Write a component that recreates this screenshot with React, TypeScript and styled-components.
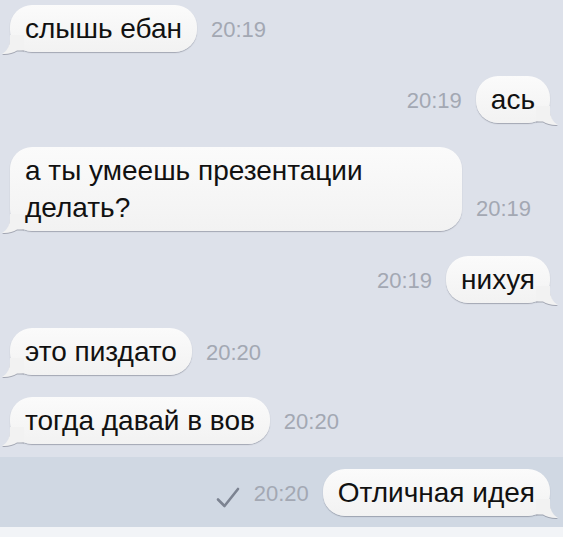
import React from "react";
import styled, { createGlobalStyle } from "styled-components";

const Global = createGlobalStyle`
  html, body { margin: 0; padding: 0; }
  body {
    background: #dde1ea;
    font-family: "Liberation Sans", Arial, Helvetica, sans-serif;
    -webkit-font-smoothing: antialiased;
  }
`;

const Screen = styled.div`
  width: 563px;
  height: 537px;
  overflow: hidden;
  display: flex;
  flex-direction: column;
  padding-top: 5px;
  box-sizing: border-box;
  background: #dde1ea;
`;

const Row = styled.div<{ $out?: boolean; $gap: number }>`
  display: flex;
  align-items: flex-end;
  justify-content: ${(p) => (p.$out ? "flex-end" : "flex-start")};
  gap: 14px;
  margin-top: ${(p) => p.$gap}px;
  padding: ${(p) => (p.$out ? "0 13px 0 0" : "0 0 0 10px")};
`;

const Band = styled.div`
  margin-top: 13px;
  padding: 12px 0 11px;
  background: #d0d8e3;
  display: flex;
  flex-direction: column;
`;

const Footer = styled.div`
  flex: 1;
  background: #f2f4f7;
`;

const Bubble = styled.div<{ $max?: number }>`
  position: relative;
  box-sizing: border-box;
  max-width: ${(p) => (p.$max ? `${p.$max}px` : "none")};
  padding: 5px 15px 5px;
  border-radius: 22px;
  background: linear-gradient(#fbfbfb, #f2f2f2);
  box-shadow: 0 1px 1px rgba(90, 95, 110, 0.45);
  color: #111;
  font-size: 28px;
  line-height: 37px;
  white-space: pre-wrap;
`;

const Text = styled.span`
  position: relative;
  z-index: 1;
`;

const TailSvg = styled.svg<{ $out?: boolean }>`
  position: absolute;
  bottom: -3px;
  ${(p) => (p.$out ? "right: -8px; transform: scaleX(-1);" : "left: -8px;")}
  width: 22px;
  height: 20px;
  overflow: visible;
  filter: drop-shadow(0 1px 0.6px rgba(90, 95, 110, 0.45));
`;

const Time = styled.span`
  color: #a3a8b3;
  font-size: 22px;
  line-height: 22px;
  margin-bottom: 11px;
  white-space: nowrap;
`;

const Meta = styled.div`
  display: flex;
  align-items: flex-end;
  gap: 14px;
`;

const Check = styled.svg`
  width: 24px;
  height: 22px;
  margin-bottom: 7px;
`;

const Tail: React.FC<{ out?: boolean }> = ({ out }) => (
  <TailSvg $out={out} viewBox="0 0 22 20">
    <path
      d="M8 0 L8 4 C8 11 5 16 0 19 C6 19.5 11 18 15 15.5 L22 15.5 L22 0 Z"
      fill="#f2f2f2"
    />
  </TailSvg>
);

type Msg = { text: string; time: string; out?: boolean; gap: number; max?: number };

const messages: Msg[] = [
  { text: "слышь ебан", time: "20:19", gap: 0 },
  { text: "ась", time: "20:19", out: true, gap: 24 },
  { text: "а ты умеешь презентации делать?", time: "20:19", gap: 24, max: 452 },
  { text: "нихуя", time: "20:19", out: true, gap: 25 },
  { text: "это пиздато", time: "20:20", gap: 25 },
  { text: "тогда давай в вов", time: "20:20", gap: 22 },
];

const Message: React.FC<{ m: Msg; check?: boolean }> = ({ m, check }) => {
  const bubble = (
    <Bubble $max={m.max}>
      <Tail out={m.out} />
      <Text>{m.text}</Text>
    </Bubble>
  );
  const meta = (
    <Meta>
      {check && (
        <Check viewBox="0 0 24 22">
          <path
            d="M2 12.5 L8.5 19 L22 2"
            fill="none"
            stroke="#7c8391"
            strokeWidth="2.6"
            strokeLinecap="round"
            strokeLinejoin="round"
          />
        </Check>
      )}
      <Time>{m.time}</Time>
    </Meta>
  );
  return (
    <Row $out={m.out} $gap={m.gap}>
      {m.out ? (
        <>
          {meta}
          {bubble}
        </>
      ) : (
        <>
          {bubble}
          {meta}
        </>
      )}
    </Row>
  );
};

export default function App() {
  return (
    <>
      <Global />
      <Screen>
        {messages.map((m, i) => (
          <Message key={i} m={m} />
        ))}
        <Band>
          <Message
            m={{ text: "Отличная идея", time: "20:20", out: true, gap: 0 }}
            check
          />
        </Band>
        <Footer />
      </Screen>
    </>
  );
}
